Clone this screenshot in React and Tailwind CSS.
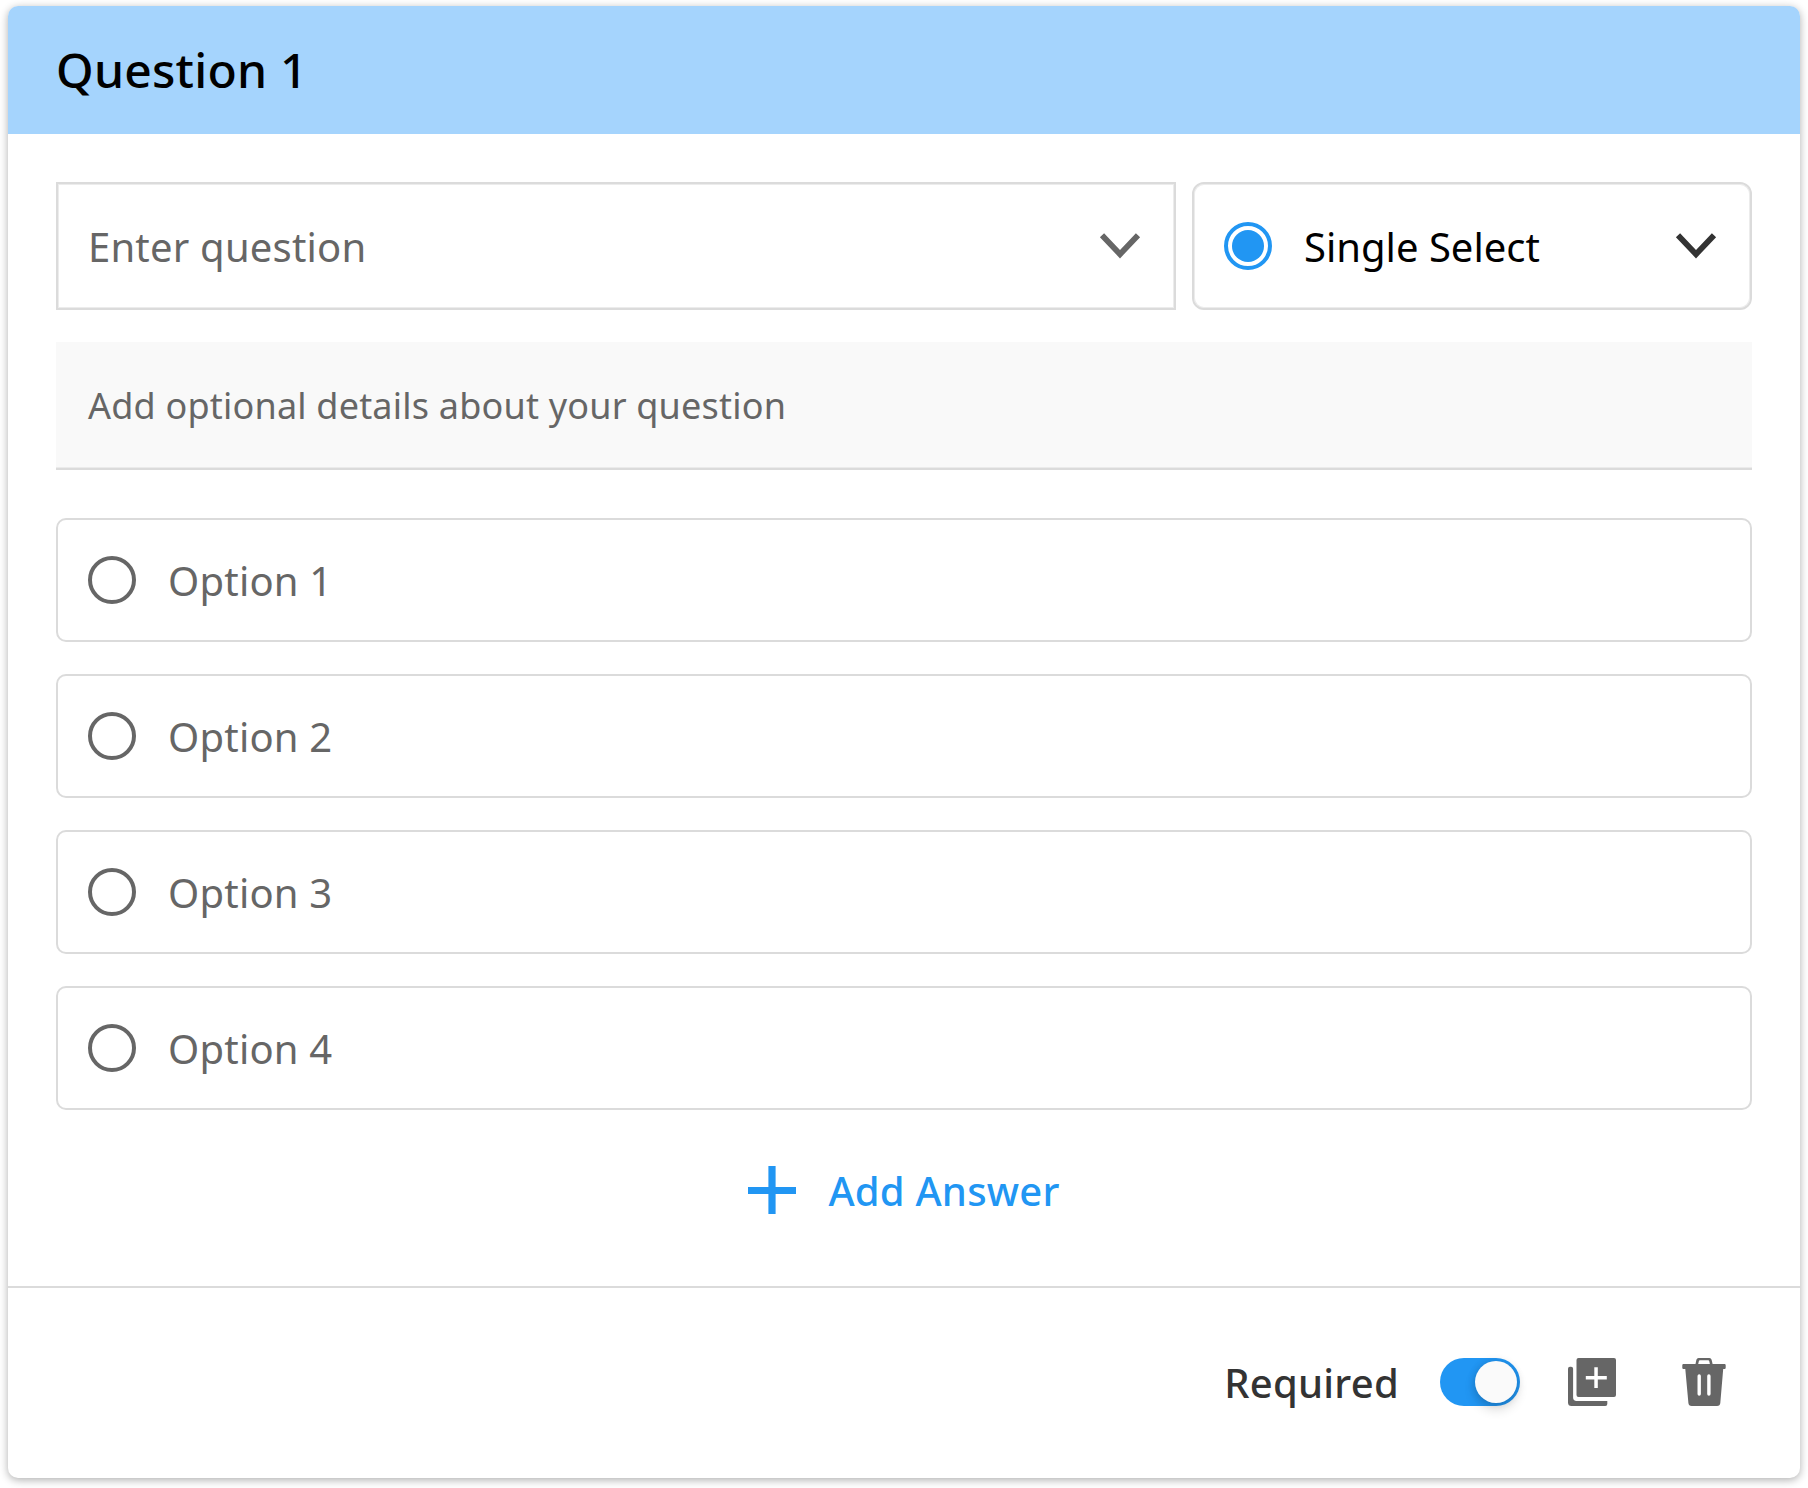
const options = ["Option 1", "Option 2", "Option 3", "Option 4"];

function Chevron({ className }) {
  return (
    <svg width="48" height="48" viewBox="0 0 48 48" fill="none" className={className}>
      <path d="M6 13.2 24 32.2 42 13.2" stroke="currentColor" strokeWidth="5.8" />
    </svg>
  );
}

function PlusIcon() {
  return (
    <svg width="48" height="48" viewBox="0 0 48 48" fill="currentColor">
      <path d="M20.4 0h7.2v21h20.4v7H27.6v20h-7.2V28H0v-7h20.4z" />
    </svg>
  );
}

function DuplicateIcon() {
  return (
    <svg width="48" height="48" viewBox="0 0 48 48" fill="currentColor">
      <path d="M2 8.7h1.1a2 2 0 0 1 2 2V39.500a3.400 3.400 0 0 0 3.400 3.400H39.300v3.100a2 2 0 0 1-2 2H3.500A3.500 3.500 0 0 1 0 44.500V10.700a2 2 0 0 1 2-2z" />
      <path
        fillRule="evenodd"
        d="M10.500 0h35.500a2 2 0 0 1 2 2v35a2 2 0 0 1-2 2H10.500a2 2 0 0 1-2-2V2a2 2 0 0 1 2-2zM26.300 9.300v8.700h-8.500v3.500h8.500v8.500h3.500v-8.500h9v-3.500h-9V9.300z"
      />
    </svg>
  );
}

function TrashIcon() {
  return (
    <svg width="48" height="48" viewBox="0 0 48 48" fill="currentColor">
      <path
        fillRule="evenodd"
        d="M18.600 0h10.800a2.400 2.400 0 0 1 2.200 1.700L32.600 6H44.500a1.200 1.200 0 0 1 1.200 1.200v2.600a1.200 1.200 0 0 1-1.200 1.200H43.200L40.300 45a3.300 3.300 0 0 1-3.300 3H11.700a3.300 3.300 0 0 1-3.300-3L5.300 11H3.500a1.200 1.200 0 0 1-1.200-1.200V7.200A1.200 1.200 0 0 1 3.500 6H15.500L16.400 1.700A2.400 2.400 0 0 1 18.600 0zM19.900 2.200a1 1 0 0 0-1 .7L18.200 6H29.900L29.200 2.900a1 1 0 0 0-1-.7zM17.500 18v18a1.700 1.700 0 0 0 3.400 0V18a1.700 1.700 0 0 0-3.400 0zM27.200 18v18a1.700 1.700 0 0 0 3.400 0V18a1.700 1.700 0 0 0-3.400 0z"
      />
    </svg>
  );
}

export default function App() {
  return (
    <div className="h-[1488px] w-[1808px] overflow-hidden bg-white px-2 pt-1.5 font-['Noto_Sans',sans-serif] text-[40px] leading-[56px] tracking-[0.2px] text-[#666666]">
      <section className="flex h-[1472px] flex-col overflow-hidden rounded-[10px] bg-white shadow-[0_2px_8px_rgba(0,0,0,0.32)]">
        <header className="flex h-32 items-center bg-[#a5d4fd] px-12">
          <h1 className="text-[48px] leading-[64px] font-medium tracking-[0.25px] text-black">Question 1</h1>
        </header>

        <div className="flex h-[1152px] flex-col px-12 pt-12">
          <div className="flex gap-4">
            <div className="flex h-32 flex-1 items-center justify-between border-2 border-[#dbdbdb] px-[30px] shadow-[inset_0_0_0_1px_#ececec]">
              <span className="pt-0.5">Enter question</span>
              <Chevron />
            </div>
            <div className="flex h-32 w-[560px] items-center rounded-xl border-2 border-[#dbdbdb] px-[30px] shadow-[inset_0_0_0_1px_#ececec]">
              <span className="flex size-12 items-center justify-center rounded-full border-4 border-[#2196f3]">
                <span className="size-8 rounded-full bg-[#2196f3]" />
              </span>
              <span className="ml-8 flex-1 pt-0.5 tracking-normal text-black">Single Select</span>
              <Chevron className="text-[#333333]" />
            </div>
          </div>

          <div className="mt-8 flex h-32 items-center border-b-2 border-[#dbdbdb] bg-[#f9f9f9] px-8 pt-0.5 text-[36px] shadow-[inset_0_-1px_0_#ebebeb]">
            Add optional details about your question
          </div>

          <div className="mt-12 flex flex-col gap-8">
            {options.map((label) => (
              <div
                key={label}
                className="flex h-[124px] items-center gap-8 rounded-[10px] border-2 border-[#dbdbdb] px-[30px]"
              >
                <span className="size-12 rounded-full border-4 border-[#666666]" />
                <span className="pt-0.5">{label}</span>
              </div>
            ))}
          </div>

          <button className="mt-[51px] flex items-center justify-center gap-8 font-medium tracking-[0.2px] text-[#2196f3]">
            <PlusIcon />
            <span className="pt-0.5">Add Answer</span>
          </button>
        </div>

        <footer className="flex h-[192px] items-center justify-end border-t-2 border-[#dbdbdb] pr-[72px] pb-0.5">
          <span className="pt-0.5 font-medium tracking-[0.25px] text-[#333333]">Required</span>
          <span className="ml-[41px] flex h-12 w-20 items-center justify-end rounded-full bg-[#2196f3] pr-[3px]">
            <span className="size-[42px] rounded-full bg-[#fafafa] shadow-[0_6px_12px_rgba(0,0,0,0.16),0_0_8px_rgba(0,0,0,0.12)]" />
          </span>
          <span className="ml-12">
            <DuplicateIcon />
          </span>
          <span className="ml-16">
            <TrashIcon />
          </span>
        </footer>
      </section>
    </div>
  );
}
